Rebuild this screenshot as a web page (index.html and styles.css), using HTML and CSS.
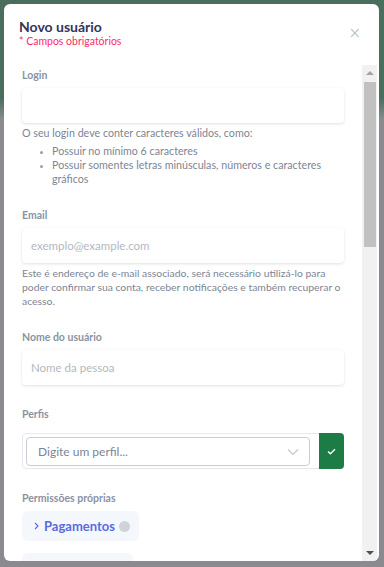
FILE: index.html
```html
<!DOCTYPE html>
<html lang="pt-BR">
<head>
  <meta charset="UTF-8" />
  <title>Novo usuário</title>
  <link rel="stylesheet" href="styles.css">
</head>
<body>
  <div class="backdrop">
    <div class="modal">
      <!-- Cabeçalho do modal -->
      <div class="modal-header">
        <div>
          <h1>Novo usuário</h1>
          <div class="required">* Campos obrigatórios</div>
        </div>
        <button class="close" aria-label="Fechar">&times;</button>
      </div>

      <div class="modal-body">
        <div class="content">
          <div class="field">
            <label>Login</label>
            <input type="text" class="input" />
            <p class="help">O seu login deve conter caracteres válidos, como:</p>
            <ul class="help-list">
              <li>Possuir no mínimo 6 caracteres</li>
              <li>Possuir somentes letras minúsculas, números e caracteres gráficos</li>
            </ul>
          </div>

          <div class="field">
            <label>Email</label>
            <input type="text" class="input" placeholder="exemplo@example.com" />
            <p class="help wide">Este é endereço de e-mail associado, será necessário utilizá-lo para poder confirmar sua conta, receber notificações e também recuperar o acesso.</p>
          </div>

          <div class="field">
            <label>Nome do usuário</label>
            <input type="text" class="input" placeholder="Nome da pessoa" />
          </div>

          <div class="field">
            <label class="label-lg">Perfis</label>
            <div class="select-group">
              <div class="select">
                <span>Digite um perfil...</span>
                <svg width="12" height="8" viewBox="0 0 12 8"><path d="M1 1.5 6 6.5 11 1.5" fill="none" stroke="#c3c7ce" stroke-width="1.2"/></svg>
              </div>
              <button class="confirm" aria-label="Confirmar">
                <svg width="9" height="7" viewBox="0 0 9 7"><path d="M1 3.6 3.3 5.8 8 1.2" fill="none" stroke="#fff" stroke-width="1.4"/></svg>
              </button>
            </div>
          </div>

          <div class="field">
            <label>Permissões próprias</label>
            <div class="chips">
              <div class="chip">
                <svg width="5" height="8" viewBox="0 0 5 8"><path d="M1 1 4 4 1 7" fill="none" stroke="#5b6be0" stroke-width="1.1"/></svg>
                <span>Pagamentos</span>
                <i class="dot"></i>
              </div>
              <div class="chip short">
                <span>&nbsp;</span>
              </div>
            </div>
          </div>
        </div>

        <!-- Barra de rolagem -->
        <div class="scrollbar">
          <div class="arrow up"></div>
          <div class="thumb"></div>
          <div class="arrow down"></div>
        </div>
      </div>
    </div>
  </div>
</body>
</html>
```

FILE: styles.css
```css
body {
  margin: 0;
  font-family: 'Lato', 'Noto Sans', sans-serif;
  background: #8b8b8f;
  overflow: hidden;
}
.backdrop {
  height: 567px;
  padding: 4px 5px 6px 4px;
  box-sizing: border-box;
  background: linear-gradient(#4a6e5e 0, #4a6e5e 98px, #8b8b8f 120px);
}
.modal {
  background: #ffffff;
  border-radius: 6px;
  height: 557px;
  display: flex;
  flex-direction: column;
  overflow: hidden;
}
.modal-header {
  display: flex;
  justify-content: space-between;
  align-items: flex-start;
  height: 61px;
  box-sizing: border-box;
  padding: 15px 18px 0 15px;
}
.modal-header h1 {
  margin: 0;
  font-size: 14px;
  font-weight: 700;
  color: #35355a;
  line-height: 16px;
}
.required {
  color: #ff2b6a;
  font-size: 10.5px;
  line-height: 13px;
}
.close {
  border: none;
  background: none;
  padding: 0;
  margin-top: 7px;
  font-size: 15px;
  line-height: 14px;
  color: #a9adb4;
  font-family: 'DejaVu Sans', sans-serif;
  font-weight: 300;
}
.modal-body {
  flex: 1;
  display: flex;
  min-height: 0;
  padding-right: 2px;
}
.content {
  flex: 1;
  overflow: hidden;
  padding: 3px 18px 0 18px;
}
.field {
  margin-bottom: 22px;
}
.field label {
  display: block;
  font-size: 10.5px;
  line-height: 14px;
  font-weight: 700;
  color: #8a93a3;
  margin-bottom: 6px;
}
.field .label-lg {
  margin-bottom: 12px;
}
.input {
  display: block;
  width: 100%;
  box-sizing: border-box;
  height: 35px;
  border: none;
  border-radius: 4px;
  box-shadow: 0 1px 3px rgba(0, 0, 0, 0.12);
  padding: 0 9px;
  font-family: inherit;
  font-size: 11.5px;
  color: #333;
}
.input::placeholder {
  color: #b3b8c1;
}
.help {
  margin: 3px 0 0 0;
  font-size: 10.7px;
  line-height: 14px;
  color: #7d8594;
}
.help.wide {
  font-size: 10.4px;
  line-height: 14px;
}
.help-list {
  margin: 4px 0 0 0;
  padding-left: 30px;
  font-size: 10.7px;
  line-height: 14px;
  color: #7d8594;
}
.help-list li::marker {
  font-size: 8px;
  color: #9aa1ad;
}

/* Seleção de perfis */
.select-group {
  display: flex;
  align-items: stretch;
  height: 36px;
  border: 1px solid #e7e9ee;
  border-radius: 4px;
  box-sizing: border-box;
  padding: 3px 0 0 3px;
  gap: 9px;
}
.select {
  flex: 1;
  display: flex;
  align-items: center;
  justify-content: space-between;
  height: 29px;
  box-sizing: border-box;
  border: 1px solid #c9cdd4;
  border-radius: 4px;
  padding: 0 10px 0 11px;
  font-size: 12px;
  color: #7a8598;
}
.confirm {
  width: 25px;
  margin: -4px -1px -1px 0;
  border: none;
  border-radius: 0 4px 4px 0;
  background: #1d7c45;
  display: flex;
  align-items: center;
  justify-content: center;
  padding: 0;
}

/* Permissões */
.chips {
  display: flex;
  flex-direction: column;
  align-items: flex-start;
  gap: 12px;
}
.chip {
  display: flex;
  align-items: center;
  gap: 5px;
  height: 30px;
  width: 117px;
  box-sizing: border-box;
  padding: 0 0 0 12px;
  background: #f4f7fc;
  border-radius: 6px;
  font-size: 13px;
  font-weight: 700;
  color: #5a6bdc;
}
.chip.short {
  width: 111px;
}
.dot {
  width: 11px;
  height: 11px;
  border-radius: 50%;
  background: #d1d3da;
  margin-left: -1px;
}

/* Barra de rolagem */
.scrollbar {
  width: 15px;
  background: #f1f1f1;
  display: flex;
  flex-direction: column;
  align-items: center;
}
.arrow {
  width: 0;
  height: 0;
  border-left: 4px solid transparent;
  border-right: 4px solid transparent;
}
.arrow.up {
  margin-top: 6px;
  border-bottom: 4px solid #a3a3a3;
}
.arrow.down {
  margin-top: auto;
  margin-bottom: 6px;
  border-top: 4px solid #505050;
}
.thumb {
  width: 12px;
  height: 165px;
  margin-top: 7px;
  background: #c1c1c1;
}
```
